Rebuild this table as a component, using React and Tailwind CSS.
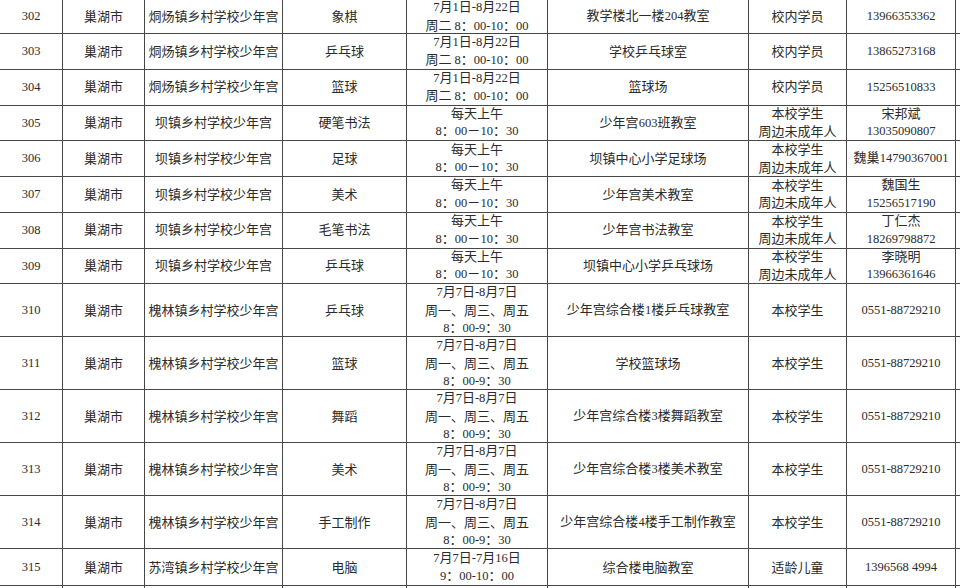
import React from 'react';

const T1 = ['7月1日-8月22日', '周二 8：00-10：00'];
const T2 = ['每天上午', '8：00－10：30'];
const T3 = ['7月7日-8月7日', '周一、周三、周五', '8：00-9：30'];
const LOCAL = ['本校学生', '周边未成年人'];

const rows = [
  { h: 'h-[34px]', no: '302', school: '烔炀镇乡村学校少年宫', item: '象棋', time: T1, place: '教学楼北一楼204教室', who: ['校内学员'], tel: ['13966353362'] },
  { h: 'h-[35.75px]', no: '303', school: '烔炀镇乡村学校少年宫', item: '乒乓球', time: T1, place: '学校乒乓球室', who: ['校内学员'], tel: ['13865273168'] },
  { h: 'h-[35.75px]', no: '304', school: '烔炀镇乡村学校少年宫', item: '篮球', time: T1, place: '篮球场', who: ['校内学员'], tel: ['15256510833'] },
  { h: 'h-[35.75px]', no: '305', school: '坝镇乡村学校少年宫', item: '硬笔书法', time: T2, place: '少年宫603班教室', who: LOCAL, tel: ['宋邦斌', '13035090807'] },
  { h: 'h-[35.75px]', no: '306', school: '坝镇乡村学校少年宫', item: '足球', time: T2, place: '坝镇中心小学足球场', who: LOCAL, tel: ['魏巢14790367001'] },
  { h: 'h-[35.75px]', no: '307', school: '坝镇乡村学校少年宫', item: '美术', time: T2, place: '少年宫美术教室', who: LOCAL, tel: ['魏国生', '15256517190'] },
  { h: 'h-[35.75px]', no: '308', school: '坝镇乡村学校少年宫', item: '毛笔书法', time: T2, place: '少年宫书法教室', who: LOCAL, tel: ['丁仁杰', '18269798872'] },
  { h: 'h-[35.75px]', no: '309', school: '坝镇乡村学校少年宫', item: '乒乓球', time: T2, place: '坝镇中心小学乒乓球场', who: LOCAL, tel: ['李晓明', '13966361646'] },
  { h: 'h-[53px]', no: '310', school: '槐林镇乡村学校少年宫', item: '乒乓球', time: T3, place: '少年宫综合楼1楼乒乓球教室', who: ['本校学生'], tel: ['0551-88729210'] },
  { h: 'h-[53px]', no: '311', school: '槐林镇乡村学校少年宫', item: '篮球', time: T3, place: '学校篮球场', who: ['本校学生'], tel: ['0551-88729210'] },
  { h: 'h-[53px]', no: '312', school: '槐林镇乡村学校少年宫', item: '舞蹈', time: T3, place: '少年宫综合楼3楼舞蹈教室', who: ['本校学生'], tel: ['0551-88729210'] },
  { h: 'h-[53px]', no: '313', school: '槐林镇乡村学校少年宫', item: '美术', time: T3, place: '少年宫综合楼3楼美术教室', who: ['本校学生'], tel: ['0551-88729210'] },
  { h: 'h-[53px]', no: '314', school: '槐林镇乡村学校少年宫', item: '手工制作', time: T3, place: '少年宫综合楼4楼手工制作教室', who: ['本校学生'], tel: ['0551-88729210'] },
  { h: 'h-[37px]', no: '315', school: '苏湾镇乡村学校少年宫', item: '电脑', time: ['7月7日-7月16日', '9：00-10：00'], place: '综合楼电脑教室', who: ['适龄儿童'], tel: ['1396568 4994'] },
];

// latin runs are set a bit smaller, like the Times digits in the source sheet
const Txt = ({ s }) =>
  s.split(/([\x20-\x7e]+)/).map((part, i) =>
    /^[\x20-\x7e]+$/.test(part) ? (
      <span key={i} className="text-[12.5px]">{part}</span>
    ) : (
      part
    )
  );

const Cell = ({ lines }) => (
  <div className="flex flex-col items-center justify-center text-center border-r border-[#474747] whitespace-nowrap overflow-hidden">
    {lines.map((l, i) => (
      <div key={i}>
        <Txt s={l} />
      </div>
    ))}
  </div>
);

const Row = ({ r }) => (
  <div className={`grid grid-cols-[63px_82px_138px_124px_141px_201px_98px_109px] border-b border-[#474747] ${r.h}`}>
    <Cell lines={[r.no]} />
    <Cell lines={['巢湖市']} />
    <Cell lines={[r.school]} />
    <Cell lines={[r.item]} />
    <Cell lines={r.time} />
    <Cell lines={[r.place]} />
    <Cell lines={r.who} />
    <Cell lines={r.tel} />
  </div>
);

export default function App() {
  return (
    <div
      className="w-[960px] h-[588px] overflow-hidden bg-white text-[#2b2b2b] text-[13px] leading-[17.5px]"
      style={{ fontFamily: '"Liberation Serif", "Noto Sans CJK SC", serif' }}
    >
      {rows.map((r) => (
        <Row key={r.no} r={r} />
      ))}
      <div className="grid grid-cols-[63px_82px_138px_124px_141px_201px_98px_109px] h-[20px]">
        {[0, 1, 2, 3, 4, 5, 6, 7].map((i) => (
          <div key={i} className="border-r border-[#474747]" />
        ))}
      </div>
    </div>
  );
}
